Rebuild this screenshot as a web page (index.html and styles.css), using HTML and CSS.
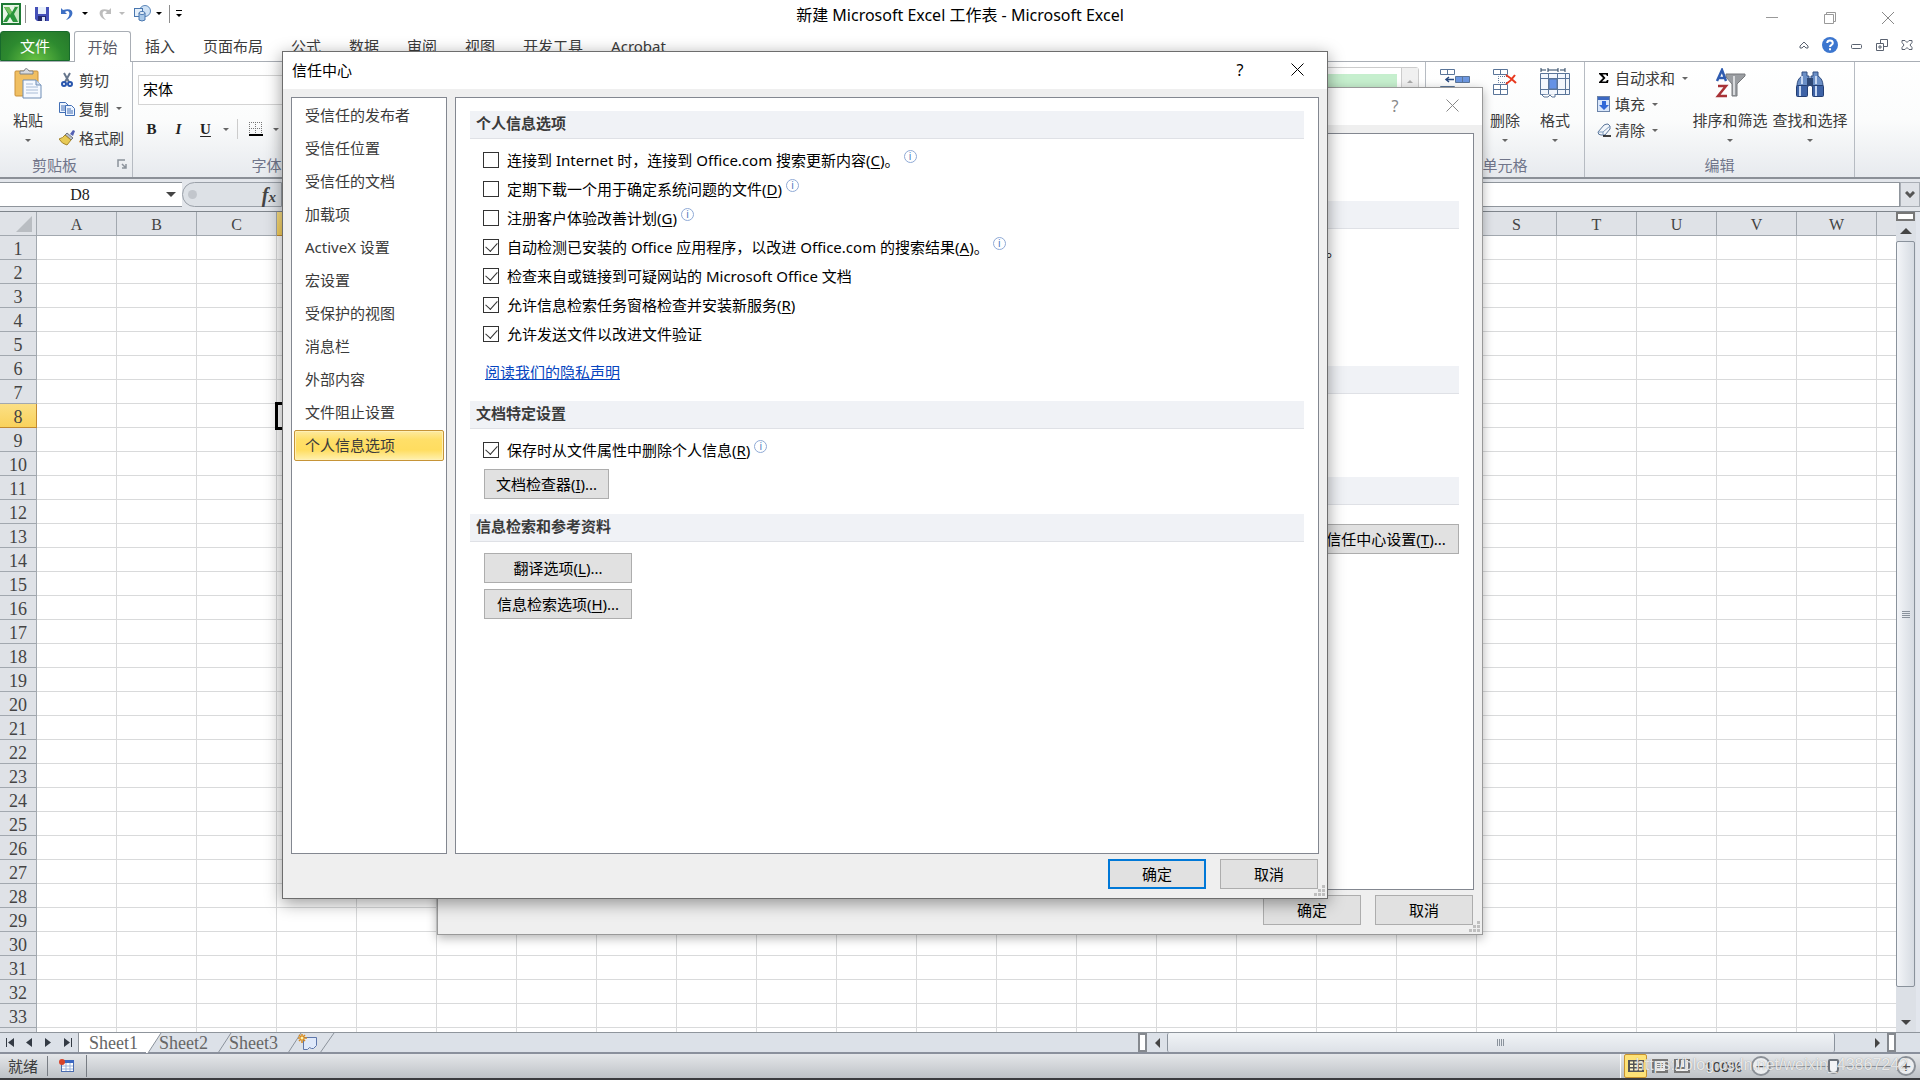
FILE: index.html
```html
<!DOCTYPE html>
<html lang="zh-CN">
<head>
<meta charset="utf-8">
<title>新建 Microsoft Excel 工作表 - Microsoft Excel</title>
<link rel="stylesheet" href="styles.css">
</head>
<body>
<div class="app">
  <header class="titlebar">
    <div class="quick">
      <svg class="logo" width="20" height="22" viewBox="0 0 20 22"><rect x="1" y="1" width="18" height="20" fill="#eaf5e8" stroke="#1f7a35" stroke-width="2"/><path d="M13 3h5v16h-5z" fill="#c9e6c4"/><path d="M3 4h5l3 5 3-5h3l-4 7 4 8h-5l-3-5-3 5H2l5-8z" fill="#2b963c"/><path d="M3 4h5l3 5-2 3z" fill="#74c060"/></svg>
      <span class="vline"></span>
      <button class="icon-btn" aria-label="保存"><svg width="14" height="14" viewBox="0 0 14 14"><path d="M0 0h14v14H2L0 12z" fill="#4550b8"/><rect x="3" width="8" height="7" fill="#e8f0fb"/><path d="M3 9h8v5H3z" fill="#23286e"/><rect x="7" y="10" width="3" height="4" fill="#dde5f5"/></svg></button>
      <button class="icon-btn undo" aria-label="撤消"><svg width="13" height="14" viewBox="0 0 13 14"><path d="M0 1v6h6L4 5c4-3 7 2 1 8 9-3 9-14-3-10z" fill="#3d6fc4"/></svg><span class="caret black"></span></button>
      <button class="icon-btn redo" aria-label="恢复"><svg width="13" height="14" viewBox="0 0 13 14"><path d="M13 1v6H7l2-2c-4-3-7 2-1 8C-1 10-1-1 11 3z" fill="#bdbdbd"/></svg><span class="caret light"></span></button>
      <button class="icon-btn shapes" aria-label="形状"><svg width="17" height="17" viewBox="0 0 17 17"><circle cx="11" cy="6" r="5.500" fill="#cfe2f5" stroke="#5b86b8"/><rect x=".5" y="3.500" width="8" height="8" fill="#e6f0fa" stroke="#4977b0"/><path d="M5 8v7q3 2 6 0V8" fill="#a8c8e8" stroke="#4977b0"/><ellipse cx="8" cy="8" rx="3" ry="1.500" fill="#eef6fd" stroke="#4977b0"/></svg><span class="caret black"></span></button>
      <span class="vline"></span>
      <button class="icon-btn more" aria-label="自定义快速访问工具栏"><span class="overline"></span><span class="caret black"></span></button>
    </div>
    <h1 class="doc-title">新建 Microsoft Excel 工作表 - Microsoft Excel</h1>
    <div class="win-buttons">
      <button aria-label="最小化"><svg width="12" height="12" viewBox="0 0 12 12"><path d="M0 5.500h12" stroke="#999"/></svg></button>
      <button aria-label="向下还原"><svg width="12" height="12" viewBox="0 0 12 12" fill="none" stroke="#999"><path d="M.5 2.500h9v9h-9zM2.500 2.500v-2h9v9h-2"/></svg></button>
      <button aria-label="关闭"><svg width="12" height="12" viewBox="0 0 12 12"><path d="M0 0l12 12M12 0L0 12" stroke="#888"/></svg></button>
    </div>
  </header>

  <nav class="tabs">
    <button class="file-tab">文件</button>
    <button class="tab active">开始</button>
    <button class="tab">插入</button>
    <button class="tab">页面布局</button>
    <button class="tab">公式</button>
    <button class="tab">数据</button>
    <button class="tab">审阅</button>
    <button class="tab">视图</button>
    <button class="tab">开发工具</button>
    <button class="tab">Acrobat</button>
    <div class="doc-buttons">
      <button aria-label="功能区最小化"><svg width="10" height="8" viewBox="0 0 10 8"><path d="M1 5l4-4 4 4v2H7L5 5 3 7H1z" fill="#fff" stroke="#5a6270"/></svg></button>
      <button aria-label="帮助"><svg width="16" height="16" viewBox="0 0 16 16"><circle cx="8" cy="8" r="8" fill="#3c76cf"/><path d="M5.200 6Q5.300 3.500 8 3.500T10.800 6Q10.800 7.200 9.500 8 8 8.700 8 10M8 11.300v2" fill="none" stroke="#fff" stroke-width="2"/></svg></button>
      <button aria-label="最小化窗口"><svg width="12" height="12" viewBox="0 0 12 12"><rect x=".5" y="5.500" width="10" height="4" rx="1" fill="#fff" stroke="#5a6270"/></svg></button>
      <button aria-label="还原窗口"><svg width="12" height="12" viewBox="0 0 12 12" fill="#fff" stroke="#5a6270"><path d="M4.500.5h7v7h-7z"/><path d="M.5 4.500h7v7h-7z"/><path d="M3 7h2v2H3z"/></svg></button>
      <button aria-label="关闭窗口"><svg width="12" height="10" viewBox="0 0 12 10"><path d="M1 .5h3l2 2 2-2h3v2L9 5l2 2.500v2H8l-2-2-2 2H1v-2L3 5 1 2.500z" fill="#fff" stroke="#5a6270"/></svg></button>
    </div>
  </nav>

  <section class="ribbon">
    <div class="group clipboard">
      <div class="group-body">
        <button class="big paste"><svg width="28" height="32" viewBox="0 0 28 32"><rect x="1" y="3" width="23" height="25" rx="1" fill="#f0bf62" stroke="#c9913a"/><path d="M6 6V3h4q2-5 5 0h4v3z" fill="#d8dbe0" stroke="#7d8288"/><path d="M9 12h13l5 5v13H9z" fill="#f5f9ff" stroke="#6f8db5"/><path d="M22 12v5h5" fill="#d6e2f2" stroke="#6f8db5"/><path d="M12 16h7M12 19h12M12 22h12M12 25h12" stroke="#a9bcd6"/></svg><span>粘贴</span><span class="caret"></span></button>
        <div class="stack">
          <button class="small"><svg width="16" height="16" viewBox="0 0 16 16"><path d="M5 1l5 9M11 1L6 10" stroke="#66768c" stroke-width="2"/><g fill="#fff" stroke="#2856ad" stroke-width="2"><circle cx="5" cy="12" r="2"/><circle cx="11" cy="12" r="2"/></g></svg>剪切</button>
          <button class="small"><svg width="16" height="16" viewBox="0 0 16 16" fill="#eef5ff" stroke="#426fb5"><path d="M.5 1.500h6l3 3v7h-9z"/><path d="M2 5h5M2 7h4M2 9h4"/><path d="M6.500 4.500h6l3 3v7h-9z"/><path d="M8 8h4M8 10h6M8 12h6"/></svg>复制<span class="caret"></span></button>
          <button class="small"><svg width="16" height="16" viewBox="0 0 16 16"><path d="M11 4l3-4 2 1-2 5z" fill="#5360b4"/><path d="M8 3l6 5-2 2-6-5z" fill="#b9bec9" stroke="#70757e"/><path d="M6 5l6 5-4 5q-5-1-8-6 4-1 6-4z" fill="#e8ca55" stroke="#a5852d"/></svg>格式刷</button>
        </div>
      </div>
      <div class="group-label">剪贴板<svg class="launcher" width="10" height="10" viewBox="0 0 10 10"><path d="M1 8V1h7M5 5l4 4M9 5v4H5" fill="none" stroke="#8b929b" stroke-width="1.500"/></svg></div>
    </div>
    <div class="group font">
      <input class="font-name" aria-label="字体" value="宋体">
      <div class="font-row">
        <button class="biu"><b>B</b></button>
        <button class="biu"><i>I</i></button>
        <button class="biu"><u>U</u></button>
        <span class="caret"></span>
        <span class="split"></span>
        <button class="biu" aria-label="边框"><svg width="14" height="14" viewBox="0 0 14 14"><path d="M.5 0v12M6.500 0v12M12.500 0v12M0 .5h13M0 6.500h13" stroke="#777" stroke-dasharray="1 1"/><path d="M0 13h14" stroke="#000" stroke-width="2"/></svg></button>
        <span class="caret"></span>
      </div>
      <div class="group-label">字体</div>
    </div>
    <div class="group styles">
      <div class="gallery"><span class="swatch"></span><button class="gallery-up" aria-label="上一行"><span class="caret up"></span></button></div>
    </div>
    <div class="group cells">
      <div class="group-body">
        <button class="big" aria-label="插入"><svg width="32" height="32" viewBox="0 0 32 32" stroke="#5a7599"><path d="M1.500 1.500h14v5h-14zM8.500 1.500v5M1.500 18.500h14v5h-14zM8.500 18.500v5" fill="#fff"/><path d="M16.500 8.500h14v6h-14zM23.500 8.500v6" fill="#6b96e0"/><path d="M15 11.500H8M10 9l-3 2.500 3 2.500" fill="none" stroke="#284a80" stroke-width="1.500"/></svg></button>
        <button class="big"><svg width="32" height="32" viewBox="0 0 32 32" stroke="#5a7599"><path d="M4.500 1.500h14v5h-14zM11.500 1.500v5M4.500 16.500h14v10h-14zM11.500 16.500v10M4.500 21.500h14" fill="#fff"/><path d="M18 8.500H9.500v6H18" fill="none" stroke-dasharray="1 1"/><path d="M17 16q5-3 9-9M17 7q5 3 10 8" fill="none" stroke="#e8391f" stroke-width="2"/></svg><span>删除</span><span class="caret"></span></button>
        <button class="big"><svg width="32" height="32" viewBox="0 0 32 32" stroke="#5a7599"><path d="M2 0v4M9 0v4M19 0v4M26 0v4M2 2h5M9 2h10M21 2h5" stroke="#26405f"/><path d="M1.500 5.500h29v21h-29z" fill="#f3f7fd"/><path d="M9.500 5v21M18.500 5v21M26.500 5v21M2 10.500h28M2 21.500h28"/><path d="M10 11h8v10h-8z" fill="#6592e5"/><path d="M3 27l2 2h4l2-2 2 2h3v-3" fill="#fff"/></svg><span>格式</span><span class="caret"></span></button>
      </div>
      <div class="group-label">单元格</div>
    </div>
    <div class="group editing">
      <div class="group-body">
        <div class="stack tight">
          <button class="small"><svg width="14" height="14" viewBox="0 0 14 14"><path d="M2 2h9v3h-1L9 3.500H5.500L8.500 7 5 10.500h4l1-1.500h1.500L11 12H2v-1l4-4-4-4z" fill="#000"/></svg>自动求和<span class="caret"></span></button>
          <button class="small"><svg width="14" height="16" viewBox="0 0 14 16"><rect x=".5" y=".5" width="12" height="15" fill="#d9e7fb" stroke="#6b83a8"/><path d="M1 1h11v3H1z" fill="#3c68c2"/><path d="M5 5h4v4h3l-5 5-5-5h3z" fill="#3068d8"/></svg>填充<span class="caret"></span></button>
          <button class="small"><svg width="14" height="14" viewBox="0 0 14 14"><path d="M1 9l6-7q2-1 4-1l2 2v3l-5 6H4q-3 0-3-3z" fill="#f2f6fb" stroke="#5a7599"/><path d="M1 9h5l7-6M6 9v3" fill="none" stroke="#7f9bbd"/><path d="M6 13h8" stroke="#000" stroke-width="1.500"/></svg>清除<span class="caret"></span></button>
        </div>
        <button class="big wide"><svg width="32" height="32" viewBox="0 0 32 32"><path d="M12 6h19v2l-8 8v12h-5V16l-6-7z" fill="#9a9da1" stroke="#77797c"/><path d="M20 8v19" stroke="#d9dbde" stroke-width="2"/><path d="M3 13L8 2l4 11M5 10h6" fill="none" stroke="#2e5bb0" stroke-width="2.500"/><path d="M4 18h8L4 28h9" fill="none" stroke="#a83236" stroke-width="2.500"/></svg><span>排序和筛选</span><span class="caret"></span></button>
        <button class="big wide"><svg width="32" height="32" viewBox="0 0 32 32"><path d="M8 4h5v4h2v10H3q0-7 5-10zM24 4h-5v4h-2v10h12q0-7-5-10z" fill="#6b8fc6" stroke="#324f82"/><path d="M13 10h6v8h-6z" fill="#2f4977"/><rect x="2.500" y="17.500" width="11" height="11" rx="1" fill="#3e63a6" stroke="#243f73"/><rect x="18.500" y="17.500" width="11" height="11" rx="1" fill="#3e63a6" stroke="#243f73"/><path d="M6 18v10M22 18v10M8 8v8M22 8v8" stroke="#c7d8f2" stroke-width="2"/></svg><span>查找和选择</span><span class="caret"></span></button>
      </div>
      <div class="group-label">编辑</div>
    </div>
    <div class="group rest"></div>
  </section>

  <section class="formula-bar">
    <input class="name-box" aria-label="名称框" value="D8">
    <button class="name-drop" aria-label="名称列表"><span class="tri-down"></span></button>
    <div class="fx-area"><span class="knob"></span><button class="fx" aria-label="插入函数"><i>f</i><small><i>x</i></small></button></div>
    <input class="formula" aria-label="编辑栏">
    <button class="expand" aria-label="展开编辑栏"><svg width="10" height="7" viewBox="0 0 10 7"><path d="M1 1l4 4 4-4" fill="none" stroke="#555" stroke-width="3"/></svg></button>
  </section>

  <main class="sheet">
    <div class="grid-wrap">
      <table class="grid"><thead><tr id="letters"><th class="corner"><svg width="16" height="16" viewBox="0 0 16 16"><path d="M16 0v16H0z" fill="#b9bdc2"/></svg></th></tr></thead><tbody id="rows"></tbody></table>
    </div>
    <div class="vscroll">
      <span class="vsplit"></span>
      <button aria-label="向上滚动"><span class="tri-up"></span></button>
      <div class="thumb"><span class="grip"></span></div>
      <span class="room"></span>
      <button aria-label="向下滚动"><span class="tri-down"></span></button>
    </div>
  </main>

  <footer class="sheet-bar">
    <div class="sheet-nav">
      <button aria-label="第一张"><svg width="9" height="9" viewBox="0 0 9 9"><path d="M0 0h1v9H0zM8 0v9L2 4.500z" fill="#333a44"/></svg></button>
      <button aria-label="上一张"><svg width="9" height="9" viewBox="0 0 9 9"><path d="M7 0v9L1 4.500z" fill="#333a44"/></svg></button>
      <button aria-label="下一张"><svg width="9" height="9" viewBox="0 0 9 9"><path d="M1 0v9l6-4.500z" fill="#333a44"/></svg></button>
      <button aria-label="最后一张"><svg width="9" height="9" viewBox="0 0 9 9"><path d="M8 0h1v9H8zM1 0v9l6-4.500z" fill="#333a44"/></svg></button>
    </div>
    <button class="sheet-tab current">Sheet1</button>
    <button class="sheet-tab"><svg class="slant" width="16" height="20" viewBox="0 0 16 20"><path d="M0 0h15L2 20H0z" fill="#fff"/><path d="M2 20L15 0" stroke="#8b929b"/></svg>Sheet2</button>
    <button class="sheet-tab"><svg class="slant" width="16" height="20" viewBox="0 0 16 20"><path d="M2 20L15 0" stroke="#8b929b"/></svg>Sheet3</button>
    <button class="sheet-tab new" aria-label="插入工作表"><svg width="50" height="20" viewBox="0 0 50 20"><path d="M2 20L15 0M34 20L48 0" stroke="#8b929b"/><path d="M17.500 4.500h13v8l-3 3h-2l-2-1-2 2h-4z" fill="#dfe9fa" stroke="#5d76ab"/><path d="M16 1v9M12 5h9M13 2l6 6M19 2l-6 6" stroke="#d88a1e" stroke-width="1.500"/><circle cx="16" cy="5" r="1.500" fill="#fff3b0"/></svg></button>
    <div class="tab-room"></div>
    <div class="hscroll">
      <span class="hsplit"></span>
      <button aria-label="向左滚动"><span class="tri-left"></span></button>
      <div class="thumb"><span class="grip"></span></div>
      <span class="room"></span>
      <button aria-label="向右滚动"><span class="tri-right"></span></button>
      <span class="hsplit"></span>
    </div>
  </footer>

  <footer class="status">
    <span class="ready">就绪</span>
    <button class="macro" aria-label="录制宏"><svg width="16" height="14" viewBox="0 0 16 14"><rect x="2.500" y="1.500" width="12" height="11" fill="#fff" stroke="#4a6cb0"/><path d="M2 1h13v3H2z" fill="#3c68c2"/><path d="M3 7h11M3 10h11M7 4v8M11 4v8" stroke="#9db5de"/><circle cx="3" cy="3" r="3" fill="#d8432b"/></svg></button>
    <span class="status-room"></span>
    <div class="views">
      <button class="view on" aria-label="普通"><svg width="16" height="12" viewBox="0 0 16 12"><path d="M0 0h16v12H0z" fill="#555"/><path d="M2 1.500h3v2H2zM6.500 1.500h3v2h-3zM11 1.500h3v2h-3zM2 5h3v2H2zM6.500 5h3v2h-3zM11 5h3v2h-3zM2 8.500h3v2H2zM6.500 8.500h3v2h-3zM11 8.500h3v2h-3z" fill="#fff6c8"/></svg></button>
      <button class="view" aria-label="页面布局"><svg width="16" height="14" viewBox="0 0 16 14"><path d="M0 0h16v14H0z" fill="#777"/><path d="M3 2h10v10H3z" fill="#f4f4f4"/><path d="M5 4.500h6M5 6.500h6M5 8.500h6" stroke="#888"/></svg></button>
      <button class="view" aria-label="分页预览"><svg width="16" height="14" viewBox="0 0 16 14"><path d="M0 0h16v14H0z" fill="#777"/><path d="M2 1h3v7H2zM7 1h3v7H7zM12 1h2v11H2v-2h10z" fill="#f4f4f4"/></svg></button>
    </div>
    <button class="zoom-level">100%</button>
    <div class="zoom">
      <button class="round" aria-label="缩小">−</button>
      <input type="range" min="0" max="100" value="50" aria-label="显示比例">
      <button class="round" aria-label="放大">+</button>
    </div>
    <span class="watermark">https://blog.csdn.net/weixin_43867242</span>
  </footer>
</div>

<div class="dialog back" role="dialog" aria-label="Excel 选项">
  <div class="dialog-title"><span class="name"></span><button class="help">?</button><button class="close" aria-label="关闭"><svg width="13" height="13" viewBox="0 0 13 13"><path d="M.5.5l12 12M12.500.5l-12 12" stroke="#888"/></svg></button></div>
  <div class="dialog-body">
    <div class="panel options">
      <div class="bar"></div>
      <p class="tail">。</p>
      <div class="bar"></div>
      <div class="bar low"></div>
      <button class="btn">信任中心设置(<u>T</u>)...</button>
    </div>
  </div>
  <div class="dialog-foot"><button class="btn">确定</button><button class="btn">取消</button></div>
  <svg class="sizer" width="11" height="11" viewBox="0 0 11 11"><path d="M8 0h3v3H8zM4 4h3v3H4zM8 4h3v3H8zM0 8h3v3H0zM4 8h3v3H4zM8 8h3v3H8z" fill="#bfbfbf"/></svg>
</div>

<div class="dialog front" role="dialog" aria-labelledby="trust-title">
  <div class="dialog-title"><span class="name" id="trust-title">信任中心</span><button class="help">?</button><button class="close" aria-label="关闭"><svg width="13" height="13" viewBox="0 0 13 13"><path d="M.5.5l12 12M12.500.5l-12 12" stroke="#000"/></svg></button></div>
  <div class="dialog-body">
    <nav class="side">
      <button>受信任的发布者</button>
      <button>受信任位置</button>
      <button>受信任的文档</button>
      <button>加载项</button>
      <button>ActiveX 设置</button>
      <button>宏设置</button>
      <button>受保护的视图</button>
      <button>消息栏</button>
      <button>外部内容</button>
      <button>文件阻止设置</button>
      <button class="selected">个人信息选项</button>
    </nav>
    <div class="panel">
      <h2>个人信息选项</h2>
      <div class="checks">
        <label><input type="checkbox"><span>连接到 Internet 时，连接到 Office.com 搜索更新内容(<u>C</u>)。</span><i class="info">i</i></label>
        <label><input type="checkbox"><span>定期下载一个用于确定系统问题的文件(<u>D</u>)</span><i class="info">i</i></label>
        <label><input type="checkbox"><span>注册客户体验改善计划(<u>G</u>)</span><i class="info">i</i></label>
        <label><input type="checkbox" checked><span>自动检测已安装的 Office 应用程序，以改进 Office.com 的搜索结果(<u>A</u>)。</span><i class="info">i</i></label>
        <label><input type="checkbox" checked><span>检查来自或链接到可疑网站的 Microsoft Office 文档</span></label>
        <label><input type="checkbox" checked><span>允许信息检索任务窗格检查并安装新服务(<u>R</u>)</span></label>
        <label><input type="checkbox" checked><span>允许发送文件以改进文件验证</span></label>
      </div>
      <p class="privacy"><a href="#">阅读我们的隐私声明</a></p>
      <h2>文档特定设置</h2>
      <div class="checks">
        <label><input type="checkbox" checked><span>保存时从文件属性中删除个人信息(<u>R</u>)</span><i class="info">i</i></label>
      </div>
      <div class="actions inspector"><button class="btn">文档检查器(<u>I</u>)...</button></div>
      <h2>信息检索和参考资料</h2>
      <div class="actions research"><button class="btn">翻译选项(<u>L</u>)...</button><button class="btn">信息检索选项(<u>H</u>)...</button></div>
    </div>
  </div>
  <div class="dialog-foot"><button class="btn primary">确定</button><button class="btn">取消</button></div>
  <svg class="sizer" width="11" height="11" viewBox="0 0 11 11"><path d="M8 0h3v3H8zM4 4h3v3H4zM8 4h3v3H8zM0 8h3v3H0zM4 8h3v3H4zM8 8h3v3H8z" fill="#bfbfbf"/></svg>
</div>
<script src="grid.js"></script>
</body>
</html>
```
FILE: grid.js
```js
// Builds the worksheet: columns A to X, rows 1 to 34, with D8 as the active cell.
const letters = "ABCDEFGHIJKLMNOPQRSTUVWX".split("");
const head = document.getElementById("letters");
const rows = document.getElementById("rows");
letters.forEach((letter) => {
  const th = document.createElement("th");
  th.textContent = letter === "X" ? "" : letter;
  if (letter === "D") th.className = "active";
  head.append(th);
});
for (let n = 1; n <= 34; n++) {
  const tr = document.createElement("tr");
  const th = document.createElement("th");
  th.textContent = n > 33 ? "" : n;
  if (n === 8) th.className = "active";
  tr.append(th);
  letters.forEach((letter) => {
    const td = document.createElement("td");
    if (n === 8 && letter === "D") td.className = "cursor";
    tr.append(td);
  });
  rows.append(tr);
}
```
FILE: styles.css
```css
* { box-sizing: border-box; }
body { margin: 0; height: 100vh; overflow: hidden; font: 15px/20px "Noto Sans", "Noto Sans CJK SC", sans-serif; color: #3b3b3b; background: #fff; }
button, input { font: inherit; color: inherit; margin: 0; padding: 0; border: 0; background: none; border-radius: 0; }
button { display: flex; align-items: center; justify-content: center; white-space: nowrap; }
svg { display: block; flex: none; }
h1, h2, p { margin: 0; }
u { text-underline-offset: 2px; }

.app { height: 100vh; display: flex; flex-direction: column; }
.caret { flex: none; border: 3px solid transparent; border-top-color: #666; border-bottom: 0; }
.caret.black { border-top-color: #000; }
.caret.light { border-top-color: #bbb; }
.caret.up { border-top: 0; border-bottom: 3px solid #aaa; }
.tri-up { border: 6px solid transparent; border-top: 0; border-bottom-color: #444; }
.tri-down { border: 5px solid transparent; border-bottom: 0; border-top-color: #444; }
.tri-left { border: 5px solid transparent; border-left: 0; border-right-color: #444; }
.tri-right { border: 5px solid transparent; border-right: 0; border-left-color: #444; }

/* Title bar */
.titlebar { flex: none; height: 31px; display: grid; grid-template-columns: 1fr auto 1fr; align-items: center; }
.quick { display: flex; align-items: center; padding: 0 0 4px 1px; }
.vline { width: 1px; height: 18px; margin: 0 4px; background: #8d8d8d; }
.icon-btn { height: 20px; gap: 8px; margin-left: 5px; }
.icon-btn.undo { margin-left: 12px; }
.icon-btn.redo { margin-left: 10px; }
.icon-btn.shapes { margin-left: 9px; gap: 5px; }
.shapes + .vline { margin: 0 0 0 7px; }
.icon-btn.more { flex-direction: column; gap: 3px; margin-left: 6px; }
.overline { width: 6px; height: 1px; background: #000; }
.doc-title { padding-bottom: 2px; font-size: 16px; font-weight: 400; color: #000; }
.win-buttons { display: flex; justify-content: flex-end; gap: 46px; padding: 4px 26px 0 0; }

/* Ribbon tabs */
.tabs { flex: none; height: 31px; display: flex; border-bottom: 1px solid #a9aeb5; }
.file-tab { width: 70px; margin-right: 4px; color: #fff; border: 1px solid #176a2c; border-radius: 3px 3px 0 0; background: radial-gradient(ellipse at 50% 110%, #6cc644, #2d8a2f 60%, #25772b); }
.tab { padding: 0 14px; }
.tab.active { width: 57px; padding: 0; margin-bottom: -1px; border: 1px solid #a9aeb5; border-bottom: 0; border-radius: 3px 3px 0 0; background: #fff; color: #5b5b66; }
.doc-buttons { margin-left: auto; display: flex; align-items: center; gap: 13px; padding: 0 7px 2px 0; }

/* Ribbon */
.ribbon { flex: none; height: 117px; display: flex; border-bottom: 2px solid #8b9097; background: linear-gradient(#fff, #fbfcfc 50%, #e7eaee); }
.group { display: flex; flex-direction: column; border-right: 1px solid #b6bbc2; }
.group-body { display: flex; flex: 1; padding-top: 4px; }
.group-label { flex: none; height: 22px; margin-top: auto; color: #70758a; text-align: center; display: flex; justify-content: center; }
.big { flex-direction: column; justify-content: flex-start; width: 50px; padding-top: 2px; }
.big > span:nth-child(2) { margin: 10px 0 9px; line-height: 20px; }
.big.wide { width: 80px; }
.stack { display: flex; flex-direction: column; }
.small { height: 29px; gap: 4px; justify-content: flex-start; padding-bottom: 2px; }
.small .caret { margin-left: 3px; }
.stack.tight .small { height: 26px; }
.clipboard { width: 133px; }
.clipboard .stack { padding-left: 9px; }
.paste { width: 50px; padding-left: 6px; }
.clipboard .group-label { justify-content: flex-end; gap: 40px; padding-right: 5px; }
.launcher { margin-top: 4px; }
.font { flex: 0 0 263px; padding: 13px 0 0 5px; }
.font-name { height: 30px; width: 240px; border: 1px solid #d4d4d4; padding: 0 4px 4px; color: #000; background: #fff; }
.font-row { display: flex; align-items: center; gap: 8px; padding: 14px 0 0 4px; color: #222; font: 700 15px/20px "Liberation Serif", serif; }
.biu { width: 19px; height: 20px; }
.font-row > .split { width: 1px; height: 20px; background: #ccc; }
.styles { flex: 1; align-items: flex-end; padding: 5px 6px 0 0; }
.gallery { display: flex; justify-content: flex-end; width: 500px; height: 80px; border: 1px solid #ccc; border-radius: 3px; background: #fff; }
.swatch { width: 120px; height: 60px; margin: 6px 4px 0 0; background: #c6efce; }
.gallery-up { width: 17px; height: 26px; border-left: 1px solid #ccc; background: #f0f0f0; }
.cells { width: 159px; }
.cells .group-body { padding-left: 4px; }
.editing { width: 270px; }
.editing .group-body { padding-left: 12px; }
.editing .stack { width: 93px; }
.rest { width: 65px; border-right: 0; }

/* Formula bar */
.formula-bar { flex: none; height: 33px; display: flex; padding: 3px 0 4px; background: #e3e6eb; border-bottom: 1px solid #7f858c; }
.name-box { width: 160px; border: solid #8f959c; border-width: 1px 0; text-align: center; font: 16px/20px "Liberation Serif", serif; color: #222; background: #fff; }
.name-drop { width: 22px; border: solid #8f959c; border-width: 1px 0; background: #fff; }
.fx-area { flex: none; width: 100px; display: flex; align-items: center; justify-content: space-between; padding: 0 5px; border: 1px solid #9aa0a8; border-radius: 13px 0 0 13px; background: #dde1e6; }
.knob { width: 9px; height: 9px; border-radius: 50%; background: #c2c6cc; }
.fx { font: 700 20px/22px "Liberation Serif", serif; color: #444; }
.fx small { font-size: 15px; padding-top: 5px; }
.formula { flex: 1; min-width: 0; border: 1px solid #8f959c; background: #fff; }
.expand { width: 20px; border: 1px solid #a9aeb5; background: #dfe2e7; }

/* Worksheet */
.sheet { flex: 1; min-height: 0; display: flex; }
.grid-wrap { flex: 1; min-width: 0; overflow: hidden; }
.grid { width: 1957px; table-layout: fixed; border-collapse: separate; border-spacing: 0; }
.grid tr { height: 24px; }
.grid th, .grid td { height: 24px; padding: 0; border: solid #d9dadb; border-width: 0 1px 1px 0; }
.grid th { width: 80px; font: 18px/20px "Liberation Serif", serif; color: #444; background: #dfe2e7; border-color: #a2a8af; padding-top: 3px; }
.grid thead th { font-size: 16px; }
.grid th.corner { width: 37px; padding: 1px 0 0 16px; }
.grid th.active { background: linear-gradient(#fbdf85, #f9d25c); border-color: #c28a30; }
.grid td.cursor { outline: 3px solid #000; outline-offset: -1px; }
.vscroll { width: 24px; display: flex; flex-direction: column; border-right: 4px solid #e2e6ed; background: #dce0e6; }
.vscroll button { height: 20px; }
.vscroll .thumb { flex: 744 1 0; width: 19px; display: flex; align-items: center; justify-content: center; border: 1px solid #8a929c; border-radius: 2px; background: linear-gradient(90deg, #f3f5f8, #d6dbe2); }
.vscroll .room { flex: 25 1 0; }
.vsplit { flex: none; height: 9px; margin-right: 1px; border: 2px solid #777; background: #fff; }
.vscroll .grip { width: 8px; height: 7px; background: repeating-linear-gradient(#8a929c 0 1px, transparent 1px 2px); }

/* Sheet tabs and horizontal scroll bar */
.sheet-bar { flex: none; height: 22px; display: flex; border-top: 1px solid #8f959c; border-bottom: 2px solid #8a909c; background: #dce1e8; }
.sheet-nav { width: 79px; display: flex; align-items: center; gap: 10px; padding-left: 6px; border-right: 1px solid #8f959c; }
.sheet-tab { flex: none; width: 70px; justify-content: flex-start; font: 18px/20px "Liberation Serif", serif; color: #666; }
.sheet-tab .slant { margin-right: -3px; }
.sheet-tab.current { width: 67px; padding-left: 10px; background: #fff; }
.sheet-tab.new { width: 50px; }
.tab-room { flex: 1; }
.hscroll { flex: 0 1 782px; display: flex; padding-right: 24px; }
.hscroll button { width: 20px; flex: none; }
.hscroll .thumb { flex: 668 1 0; display: flex; align-items: center; justify-content: center; border: solid #8a929c; border-width: 0 1px; border-radius: 2px; background: linear-gradient(#f0f3f6, #dde1e7); }
.hscroll .room { flex: 32 1 0; }
.hsplit { flex: none; width: 9px; border: 2px solid #85898f; background: #fff; }
.hscroll .grip { width: 8px; height: 7px; background: repeating-linear-gradient(90deg, #8a929c 0 1px, transparent 1px 2px); }

/* Status bar */
.status { flex: none; position: relative; height: 26px; display: flex; align-items: center; border-bottom: 2px solid #3b3c3f; background: linear-gradient(#e4e6e9, #bec2c7); }
.ready { padding: 0 9px 0 8px; border-right: 1px solid #777c83; }
.macro { width: 39px; height: 22px; border-right: 1px solid #777c83; }
.status-room { flex: 1; }
.views { display: flex; align-items: center; gap: 3px; padding: 0 12px 0 3px; border-left: 1px solid #fff; }
.view { width: 19px; height: 24px; }
.view.on { width: 23px; border: 1px solid #c8922e; border-radius: 2px; background: #fde277; }
.zoom-level { width: 40px; }
.zoom { display: flex; align-items: center; padding: 0 4px 0 8px; }
.round { width: 20px; height: 20px; border: 2px solid #8b9097; border-radius: 50%; background: #eceef0; font-size: 18px; line-height: 16px; color: #555; }
.zoom input { appearance: none; width: 125px; height: 20px; background: linear-gradient(#8b9097, #8b9097) center / 100% 1px no-repeat; }
.zoom input::-webkit-slider-thumb { appearance: none; width: 11px; height: 15px; border: 2px solid #6e747c; border-radius: 2px 2px 5px 5px; background: #f3f4f6; }
.watermark { position: absolute; right: 12px; top: 1px; font: 16px/20px "Liberation Sans", sans-serif; color: rgba(255, 255, 255, .8); text-shadow: 0 0 1px rgba(90, 90, 90, .6); }

/* Dialogs */
.dialog { position: absolute; width: 1046px; height: 848px; display: flex; flex-direction: column; background: #efefef; border: 1px solid #6d6d6d; box-shadow: 0 4px 16px rgba(0, 0, 0, .4); color: #000; }
.dialog.back { left: 437px; top: 87px; border-color: #999; box-shadow: 0 3px 10px rgba(0, 0, 0, .3); }
.dialog.front { left: 282px; top: 51px; }
.dialog-title { flex: none; height: 37px; display: flex; align-items: center; padding: 0 23px 2px 9px; background: #fff; }
.dialog-title .name { flex: 1; }
.help { width: 16px; margin-right: 43px; font-size: 16px; }
.back .help { color: #888; }
.dialog-body { flex: 1; min-height: 0; display: flex; gap: 8px; padding: 8px 8px 0; }
.side { width: 156px; display: flex; flex-direction: column; gap: 2px; padding: 2px; border: 1px solid #838790; background: #fff; }
.side button { height: 31px; justify-content: flex-start; padding: 0 10px 2px; border: 1px solid transparent; border-radius: 2px; color: #3b3b3b; }
.side .selected { border-color: #c69437; background: linear-gradient(#fdeaa0, #ffdf68 30%, #ffdd60 65%, #fff1b0); box-shadow: inset 0 0 0 1px #fff0b5; }
.panel { flex: 1; padding: 13px 14px 13px 13px; border: 1px solid #838790; background: #fff; }
.panel h2, .bar { height: 28px; padding: 0 6px; margin-left: 1px; font-size: 15px; line-height: 24px; font-weight: 700; color: #3b3b3b; background: #f0f2f6; border-bottom: 1px solid #dfe1e6; }
.checks { padding: 6px 0 1px 14px; }
.checks label { height: 29px; display: flex; align-items: center; }
.checks span { padding-left: 8px; }
.checks input { appearance: none; position: relative; width: 16px; height: 16px; border: 1px solid #333; background: #fff; }
.checks input:checked::after { content: ""; position: absolute; left: 4px; top: 0; width: 6px; height: 10px; border: solid #333; border-width: 0 1px 1px 0; transform: rotate(42deg); }
.info { width: 13px; height: 13px; margin: 0 0 7px 4px; border: 1px solid #8faad6; border-radius: 50%; font: 10px/11px "Noto Sans", sans-serif; color: #4a78bd; text-align: center; }
.privacy { height: 52px; padding: 13px 0 0 16px; }
.privacy a { color: #0645c0; }
.actions { display: flex; flex-direction: column; align-items: flex-start; gap: 6px; padding-left: 15px; }
.inspector { padding-top: 4px; padding-bottom: 15px; }
.research { padding-top: 11px; }
.btn { height: 30px; border: 1px solid #adadad; background: #e1e1e1; }
.inspector .btn { width: 125px; }
.research .btn { width: 148px; }
.btn.primary { border: 2px solid #0078d7; }
.dialog-foot { flex: none; height: 44px; display: flex; justify-content: flex-end; gap: 14px; padding: 5px 9px 0; }
.dialog-foot .btn { width: 98px; }
.sizer { position: absolute; right: 2px; bottom: 2px; }
.options { padding: 67px 14px 0; display: flex; flex-direction: column; }
.options .tail { height: 137px; padding: 11px 118px 0 0; text-align: right; }
.options .bar { flex: none; }
.options .bar.low { margin-top: 83px; }
.options .btn { width: 146px; margin-top: 19px; align-self: flex-end; }
```
